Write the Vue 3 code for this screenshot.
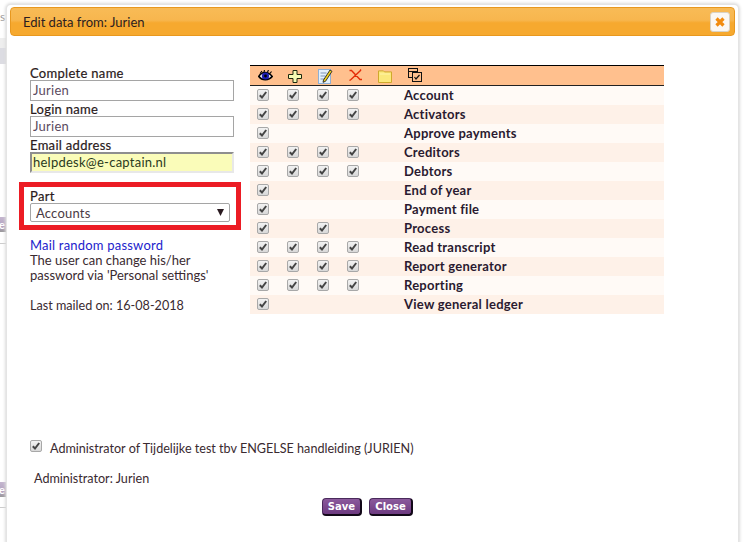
<script setup>
const rows = [
  ['Account', 1, 1, 1, 1],
  ['Activators', 1, 1, 1, 1],
  ['Approve payments', 1, 0, 0, 0],
  ['Creditors', 1, 1, 1, 1],
  ['Debtors', 1, 1, 1, 1],
  ['End of year', 1, 0, 0, 0],
  ['Payment file', 1, 0, 0, 0],
  ['Process', 1, 0, 1, 0],
  ['Read transcript', 1, 1, 1, 1],
  ['Report generator', 1, 1, 1, 1],
  ['Reporting', 1, 1, 1, 1],
  ['View general ledger', 1, 0, 0, 0],
].map(([name, ...checks]) => ({ name, checks }))
</script>

<template>
  <div class="page">
    <div class="backdrop">
      <span class="bg-bit t1">s</span>
      <span class="bg-bit b1"></span>
      <span class="bg-bit b2"></span>
      <span class="bg-bit b3">e</span>
      <span class="bg-bit b4"></span>
      <span class="bg-bit b5">e</span>
      <span class="bg-bit b6"></span>
    </div>
    <div class="dialog">
      <header class="titlebar">
        <span class="title">Edit data from: Jurien</span>
        <button class="close-x" aria-label="Close">
          <svg width="12" height="12" viewBox="0 0 12 12"><path d="M2.500 2.500l7 7M9.500 2.500l-7 7" stroke="#f28c0f" stroke-width="3.200" fill="none"/></svg>
        </button>
      </header>

      <div class="body">
        <div class="left">
          <label class="lbl">Complete name</label>
          <input class="inp" value="Jurien" />
          <label class="lbl">Login name</label>
          <input class="inp" value="Jurien" />
          <label class="lbl">Email address</label>
          <input class="inp email" value="helpdesk@e-captain.nl" />

          <div class="part-box">
            <label class="lbl part-lbl">Part</label>
            <div class="select">
              <span>Accounts</span>
              <svg width="7" height="7" viewBox="0 0 7 7"><path d="M0 0h7L3.500 7z" fill="#2a1a20"/></svg>
            </div>
          </div>

          <a class="mail-link">Mail random password</a>
          <p class="note">The user can change his/her<br />password via 'Personal settings'</p>
          <p class="last">Last mailed on: 16-08-2018</p>
        </div>

        <div class="rights">
          <div class="head">
            <span class="hicon">
              <svg width="15" height="12" viewBox="0 0 15 12">
                <path d="M.8 6.500C3.500 1.500 10 1 14.200 6.500 11 10.500 4 11 .8 6.500z" fill="#e8e8f4" stroke="#000" stroke-width="1.600"/>
                <circle cx="7.500" cy="6" r="3.600" fill="#1c1cb0"/><circle cx="7.500" cy="6" r="1.400" fill="#000"/>
                <path d="M2 3.500L4 1M6 2l.5-2M9.500 2l1-2M12 3.500l1.500-2" stroke="#000" stroke-width="1.100"/>
              </svg>
            </span>
            <span class="hicon">
              <svg width="14" height="13" viewBox="0 0 14 13"><path d="M5 .5h4v4h4.500v4H9v4H5v-4H.5v-4H5z" fill="#f6fbb4" stroke="#1e2a10" stroke-width="1"/></svg>
            </span>
            <span class="hicon">
              <svg width="15" height="16" viewBox="0 0 15 16">
                <rect x=".5" y="1.500" width="12" height="14" fill="#e4f0fb" stroke="#8fb0d4"/>
                <path d="M2.500 5h6M2.500 8h5M2.500 11h4" stroke="#7d93b5"/>
                <path d="M5.500 12l6.500-10 2 1.300-6.500 10-2.500 1z" fill="#f2d21a" stroke="#222" stroke-width=".9"/>
              </svg>
            </span>
            <span class="hicon shift-x">
              <svg width="13" height="12" viewBox="0 0 13 12"><path d="M.5 1.500h2l8.500 9h2M12 .5l-1 1.500L2 10.500.5 11.500" fill="none" stroke="#e42c08" stroke-width="1.400"/></svg>
            </span>
            <span class="hicon">
              <svg width="14" height="13" viewBox="0 0 14 13"><path d="M.5 12.500V.9h5l1 1h7v10.600z" fill="#fbe87c" stroke="#cfa92c"/><path d="M2 4h10" stroke="#fff3a8"/></svg>
            </span>
            <span class="hicon up">
              <svg width="14" height="14" viewBox="0 0 14 14" fill="none" stroke="#111">
                <rect x=".5" y=".5" width="9" height="9" fill="#ffc08e"/>
                <path d="M.5 3.500h9" />
                <rect x="4.500" y="4.500" width="9" height="9" fill="#ffc08e"/>
                <path d="M6.500 9l1.500 2 3.500-4" stroke-width="1.200"/>
              </svg>
            </span>
          </div>
          <div v-for="r in rows" :key="r.name" class="row">
            <span v-for="(c, i) in r.checks" :key="i" class="cell">
              <span v-if="c" class="cb">
                <svg width="10" height="10" viewBox="0 0 10 10"><path d="M1.800 5.200l2.200 2.300 4.200-5.500" fill="none" stroke="#444" stroke-width="2"/></svg>
              </span>
            </span>
            <span class="name">{{ r.name }}</span>
          </div>
        </div>
      </div>

      <div class="admin">
        <span class="cb raised">
          <svg width="10" height="10" viewBox="0 0 10 10"><path d="M1.800 5.200l2.200 2.300 4.200-5.500" fill="none" stroke="#444" stroke-width="2"/></svg>
        </span>
        <span>Administrator of Tijdelijke test tbv ENGELSE handleiding (JURIEN)</span>
      </div>
      <p class="admin-name">Administrator: Jurien</p>

      <div class="actions">
        <button class="btn save">Save</button>
        <button class="btn shut">Close</button>
      </div>
    </div>
  </div>
</template>

<style>
html, body { margin: 0; padding: 0; background: #fff; }
</style>

<style scoped>
.page {
  position: relative;
  width: 745px;
  height: 542px;
  overflow: hidden;
  background: #fff;
  font-family: "Lato", "Liberation Sans", sans-serif;
  font-size: 13px;
  color: #3a2a30;
}
.backdrop { position: absolute; inset: 0; }
.bg-bit { position: absolute; left: 0; width: 6px; overflow: hidden; }
.t1 { top: 9px; height: 16px; line-height: 16px; color: #9a9a9a; font-size: 12px; }
.b1 { top: 38px; height: 10px; background: #eee; }
.b2 { top: 48px; height: 16px; background: #dcdce2; }
.b3, .b5 {
  height: 15px;
  line-height: 15px;
  background: linear-gradient(#c4b6cf, #b0a0bc 70%, #999);
  color: #fff;
  font-size: 11px;
  font-weight: 700;
  text-indent: -1px;
}
.b3 { top: 217px; }
.b4 { top: 243px; height: 1px; background: #ccc; }
.b5 { top: 482px; }
.b6 { top: 507px; height: 1px; background: #ccc; }

.dialog {
  position: absolute;
  left: 7px;
  top: 5px;
  width: 731px;
  height: 537px;
  box-sizing: border-box;
  background: #fff;
  border-radius: 4px 4px 0 0;
  box-shadow: 0 0 0 1px #e4e4e4, 0 0 3px 2px #dcdcdc;
  padding: 2px 3px 0;
}
.titlebar {
  height: 29px;
  box-sizing: border-box;
  display: flex;
  align-items: center;
  justify-content: space-between;
  padding: 0 4px 0 12px;
  border: 1px solid #e8981f;
  border-radius: 4px;
  background: linear-gradient(#f8bb56, #f7b64e 45%, #f6a92f 55%, #f6a92f);
}
.title { font-size: 13px; color: #2c1c20; }
.close-x {
  width: 20px;
  height: 20px;
  padding: 0;
  display: flex;
  align-items: center;
  justify-content: center;
  background: #fbf8f3;
  border: 1px solid #d9d2c4;
  border-radius: 3px;
}
.body { display: flex; padding: 29px 0 0 8px; height: 376px; box-sizing: border-box; }
.left { width: 232px; padding-left: 12px; box-sizing: border-box; }
.lbl {
  display: block;
  line-height: 17px;
  height: 15px;
  letter-spacing: .3px;
  color: #2a1a20;
  -webkit-text-stroke: .2px #2a1a20;
}
.inp {
  display: block;
  width: 204px;
  height: 21px;
  box-sizing: border-box;
  padding: 0 2px 2px;
  border: 1px solid #a5a5a5;
  margin: 0;
  font: inherit;
  letter-spacing: .25px;
  color: #5a4a5e;
  outline: none;
  background: #fff;
}
.email {
  border: 2px solid #e8e8e8;
  border-top-color: #8e8e8e;
  border-left-color: #8e8e8e;
  padding: 0 1px 1px;
  background: #fafcb9;
  color: #2a3a20;
}
.part-box {
  width: 222px;
  height: 48px;
  box-sizing: border-box;
  margin: 9px 0 0 -11px;
  padding: 1px 0 0 6px;
  border: 5px solid #ec1c24;
}
.select {
  width: 200px;
  height: 19px;
  box-sizing: border-box;
  display: flex;
  align-items: center;
  justify-content: space-between;
  padding: 0 5px 0 5px;
  border: 1px solid #a5a5a5;
  border-radius: 2px;
  letter-spacing: .2px;
  color: #4a3a44;
}
.mail-link { display: block; margin-top: 8px; line-height: 15px; letter-spacing: .2px; color: #2222cc; }
.note { margin: 0; line-height: 15px; }
.last { margin: 15px 0 0; line-height: 15px; font-size: 12.600px; }

.rights { width: 414px; }
.head {
  height: 21px;
  box-sizing: border-box;
  display: flex;
  align-items: center;
  background: #ffc08e;
  border-top: 1px solid #000;
  border-bottom: 1px solid #222;
}
.hicon { width: 30px; display: flex; justify-content: center; padding-left: 0; margin-top: 1px; }
.hicon.up { margin-top: -2px; }
.hicon.shift-x { margin-top: -1px; }
.row {
  height: 19px;
  display: flex;
  align-items: center;
  background: #fffaf6;
  font-weight: 700;
  letter-spacing: .25px;
  color: #2a1a30;
}
.row:nth-child(odd) { background: #fef1e8; }
.cell { width: 30px; flex: none; padding-left: 7px; box-sizing: border-box; display: flex; margin-top: -1px; }
.name { margin-left: 34px; margin-top: -1px; }
.cb {
  width: 12px;
  height: 12px;
  box-sizing: border-box;
  flex: none;
  display: flex;
  align-items: center;
  justify-content: center;
  border: 1px solid #a8a8a8;
  border-radius: 2px;
  background: linear-gradient(#f2f2f2, #d8d8d8);
}
.cb.raised { margin-top: -6px; }
.admin {
  display: flex;
  align-items: center;
  gap: 8px;
  margin: 29px 0 0 20px;
  line-height: 15px;
  font-size: 12.600px;
}
.admin-name { margin: 15px 0 0 24px; line-height: 15px; font-size: 12.600px; }
.actions { display: flex; gap: 7px; margin: 12px 0 0 312px; }
.btn {
  height: 18px;
  padding: 0;
  font-family: "DejaVu Sans", sans-serif;
  font-size: 10px;
  font-weight: 700;
  color: #fff;
  border: 1px solid #4a2a5c;
  border-bottom: 2px solid #120818;
  border-right: 2px solid #120818;
  border-radius: 4px;
  background: linear-gradient(#8b5a9c, #6d3a80);
}
.save { width: 40px; }
.shut { width: 44px; }
</style>
